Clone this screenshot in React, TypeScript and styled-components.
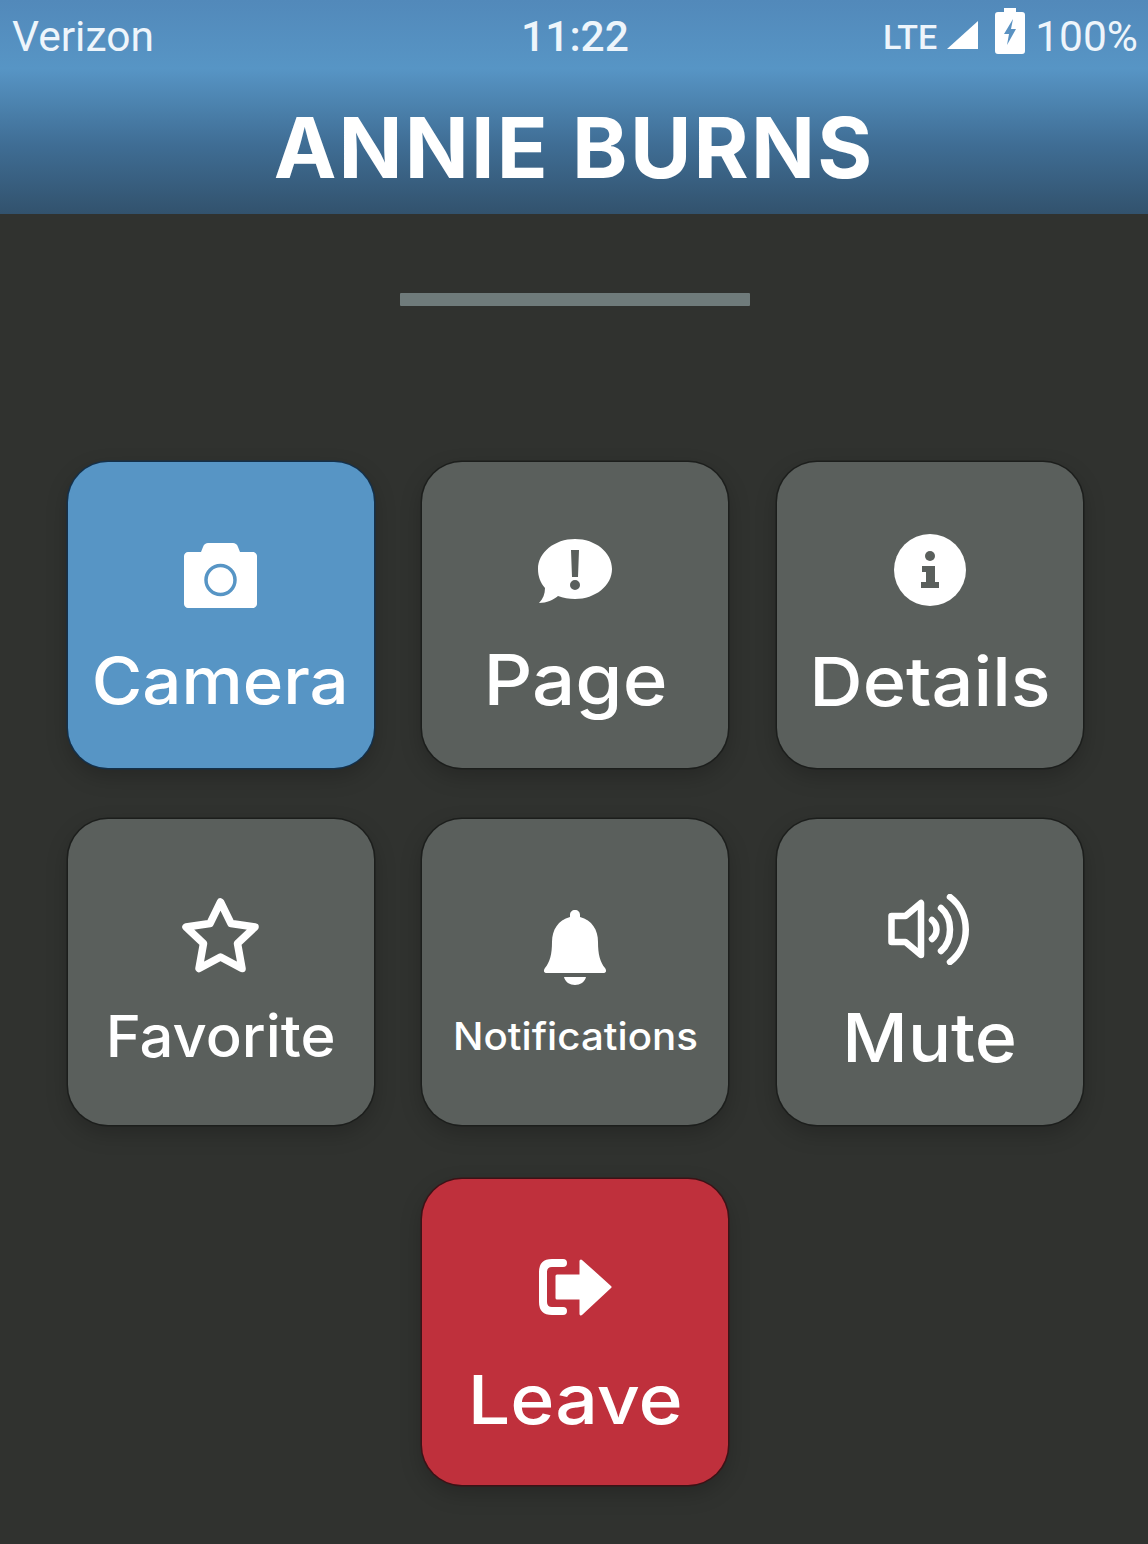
import {ReactNode} from "react";
import styled, {createGlobalStyle} from "styled-components";

type TileColor = 'blue' | 'grey' | 'red';

type TileData = {
    label: string;
    color: TileColor;
    iconTop: number;
    labelTop: number;
    labelSize: number;
    stretch: number;
    icon: ReactNode;
}

const tileColors: Record<TileColor, string> = {
    blue: '#5795c5',
    grey: '#5a5f5c',
    red: '#bf303c',
};

const outlineColors: Record<TileColor, string> = {
    blue: '#14304a',
    grey: '#1c1e1c',
    red: '#3c1216',
};

const CameraIcon = () => (
    <svg width="73" height="65" viewBox="0 0 73 65">
        <path fill="#fff" d="M4 9h13l2-5c1-3 3-4 5-4h25c2 0 4 1 5 4l2 5h13c2 0 4 2 4 4v48c0 2-2 4-4 4H4c-2 0-4-2-4-4V13c0-2 2-4 4-4z"/>
        <circle cx="36.500" cy="37" r="14.500" fill="none" stroke="#5795c5" strokeWidth="3.500"/>
    </svg>
);

const PageIcon = () => (
    <svg width="74" height="65" viewBox="0 0 74 65">
        <path fill="#fff" fillRule="evenodd" d="M37 0c20.500 0 37 13.500 37 30S57.500 60 37 60c-6 0-12-1-17-3-5 4-11 7-19 7 4-4 6-9 6-15C2.500 44 0 37.500 0 30 0 13.500 16.500 0 37 0z"/>
        <path fill="#5a5f5c" d="M33 11h8l-1 27h-6zM37 41a5 5 0 1 1 0 10 5 5 0 0 1 0-10z"/>
    </svg>
);

const DetailsIcon = () => (
    <svg width="72" height="72" viewBox="0 0 72 72">
        <circle cx="36" cy="36" r="36" fill="#fff"/>
        <circle cx="36" cy="22" r="5" fill="#5a5f5c"/>
        <path fill="#5a5f5c" d="M28 32h13v16h4v6H27v-6h5V38h-4z"/>
    </svg>
);

const StarIcon = () => (
    <svg width="77" height="75" viewBox="0 0 77 75">
        <path fill="none" stroke="#fff" strokeWidth="7.500" strokeLinejoin="round" d="M38.500 4l10.500 21.500 24 3.500-17.500 16.500 4.500 25-21.500-11.500-21.500 11.500 4.500-25L4 29l24-3.500z"/>
    </svg>
);

const BellIcon = () => (
    <svg width="64" height="75" viewBox="0 0 64 75">
        <path fill="#fff" d="M32 0c3 0 5 2 5 5v2c12 3 18 13 18 25 0 12 2 20 7 26 2 3 1 5-2 5H4c-3 0-4-2-2-5 5-6 7-14 7-26C9 20 15 10 27 7V5c0-3 2-5 5-5zM21 67h22c-1 5-6 8-11 8s-10-3-11-8z"/>
    </svg>
);

const SpeakerIcon = () => (
    <svg width="83" height="71" viewBox="0 0 83 71">
        <g fill="none" stroke="#fff" strokeWidth="6.500" strokeLinecap="round" strokeLinejoin="round">
            <path d="M3.500 22h14L33 9v52L17.500 48h-14z"/>
            <path d="M44 26c6 5 6 14 0 19"/>
            <path d="M53 14c12 10 12 33 0 43"/>
            <path d="M62 3c21 16 21 49 0 65"/>
        </g>
    </svg>
);

const LeaveIcon = () => (
    <svg width="73" height="58" viewBox="0 0 73 58">
        <path fill="none" stroke="#fff" strokeWidth="8" strokeLinecap="round" d="M24 5H13C7 5 4 8 4 14v30c0 6 3 9 9 9h11"/>
        <path fill="#fff" stroke="#fff" strokeWidth="3" strokeLinejoin="round" d="M18 18h24V3l29 26-29 27V40H18z"/>
    </svg>
);

const tiles: TileData[] = [
    {label: 'Camera', color: 'blue', iconTop: 81, labelTop: 41, labelSize: 64, stretch: 1.077, icon: <CameraIcon/>},
    {label: 'Page', color: 'grey', iconTop: 77, labelTop: 41, labelSize: 70, stretch: 1.09, icon: <PageIcon/>},
    {label: 'Details', color: 'grey', iconTop: 72, labelTop: 41, labelSize: 68, stretch: 1.087, icon: <DetailsIcon/>},
    {label: 'Favorite', color: 'grey', iconTop: 79, labelTop: 34, labelSize: 58, stretch: 1.03, icon: <StarIcon/>},
    {label: 'Notifications', color: 'grey', iconTop: 91, labelTop: 32, labelSize: 38, stretch: 1.06, icon: <BellIcon/>},
    {label: 'Mute', color: 'grey', iconTop: 75, labelTop: 38, labelSize: 68, stretch: 1.056, icon: <SpeakerIcon/>},
    {label: 'Leave', color: 'red', iconTop: 79, labelTop: 49, labelSize: 68, stretch: 1.106, icon: <LeaveIcon/>},
];

export default function App() {
    return (
        <Screen>
            <GlobalStyle/>
            <Header>
                <StatusBar>
                    <Carrier>Verizon</Carrier>
                    <Clock>11:22</Clock>
                    <StatusRight>
                        <Network>LTE</Network>
                        <SignalIcon width="31" height="28" viewBox="0 0 31 28">
                            <path fill="#fff" d="M31 0v28H0z"/>
                        </SignalIcon>
                        <BatteryIcon width="30" height="46" viewBox="0 0 30 46">
                            <path fill="#fff" d="M9 0h12v4h6c2 0 3 1 3 3v36c0 2-1 3-3 3H3c-2 0-3-1-3-3V7c0-2 1-3 3-3h6z"/>
                            <path fill="#5a92c2" d="M18 11l-9 15h5l-2 11 9-16h-5z"/>
                        </BatteryIcon>
                        <Battery>100%</Battery>
                    </StatusRight>
                </StatusBar>
                <Title>ANNIE BURNS</Title>
            </Header>
            <Progress/>
            <Grid>
                {tiles.map(tile => (
                    <Tile key={tile.label} $color={tile.color} $top={tile.iconTop}>
                        <IconSlot>{tile.icon}</IconSlot>
                        <Label $size={tile.labelSize} $top={tile.labelTop} $stretch={tile.stretch}>
                            {tile.label}
                        </Label>
                    </Tile>
                ))}
            </Grid>
        </Screen>
    );
}

const GlobalStyle = createGlobalStyle`
    html, body {
        margin: 0;
        padding: 0;
        background: #30322f;
    }
`;

const Screen = styled.div`
    width: 1148px;
    height: 1544px;
    overflow: hidden;
    background: #30322f;
    font-family: Inter, "Liberation Sans", sans-serif;
    color: #ffffff;
`;

const Header = styled.header`
    height: 214px;
    background: linear-gradient(180deg, #5289ba 0%, #5795c5 32%, #3f6d94 68%, #32526d 100%);
`;

const StatusBar = styled.div`
    box-sizing: border-box;
    height: 73px;
    display: grid;
    grid-template-columns: 1fr auto 1fr;
    align-items: center;
    padding: 0 10px 0 12px;
    font-family: Roboto, sans-serif;
    font-size: 42.500px;
    color: #eef5fb;
`;

const Carrier = styled.span``;

const Clock = styled.span`
    font-weight: 500;
`;

const StatusRight = styled.div`
    display: flex;
    align-items: center;
    justify-content: flex-end;
`;

const Network = styled.span`
    font-size: 34px;
    font-weight: 500;
    margin-right: 10px;
`;

const SignalIcon = styled.svg`
    flex: none;
    margin: 0 17px 3px 0;
`;

const BatteryIcon = styled.svg`
    flex: none;
    margin-bottom: 11px;
`;

const Battery = styled.span`
    margin-left: 10px;
`;

const Title = styled.h1`
    margin: 33px 0 0;
    text-align: center;
    font-size: 84px;
    font-weight: 700;
    line-height: 1;
    letter-spacing: 2.200px;
    color: #ffffff;
`;

const Progress = styled.div`
    width: 350px;
    height: 13px;
    margin: 79px 0 0 400px;
    border-radius: 1px;
    background: #6f7b7b;
`;

const Grid = styled.div`
    display: grid;
    grid-template-columns: repeat(3, 306px);
    grid-auto-rows: 306px;
    column-gap: 48.500px;
    row-gap: 51px;
    margin-top: 156px;
    padding-left: 67.500px;
`;

const Tile = styled.div<{$color: TileColor; $top: number}>`
    box-sizing: border-box;
    display: flex;
    flex-direction: column;
    align-items: center;
    padding-top: ${p => p.$top}px;
    border-radius: 40px;
    background: ${p => tileColors[p.$color]};
    box-shadow: 0 0 0 1.500px ${p => outlineColors[p.$color]}, 0 8px 22px rgba(0, 0, 0, 0.22);

    &:nth-child(7) {
        grid-column: 2;
        margin-top: 3px;
        margin-bottom: -3px;
    }
`;

const IconSlot = styled.div`
    display: flex;
    line-height: 0;
`;

const Label = styled.div<{$size: number; $top: number; $stretch: number}>`
    margin-top: ${p => p.$top}px;
    font-size: ${p => p.$size}px;
    transform: scaleX(${p => p.$stretch});
    line-height: 1;
    font-weight: 500;
    white-space: nowrap;
`;
